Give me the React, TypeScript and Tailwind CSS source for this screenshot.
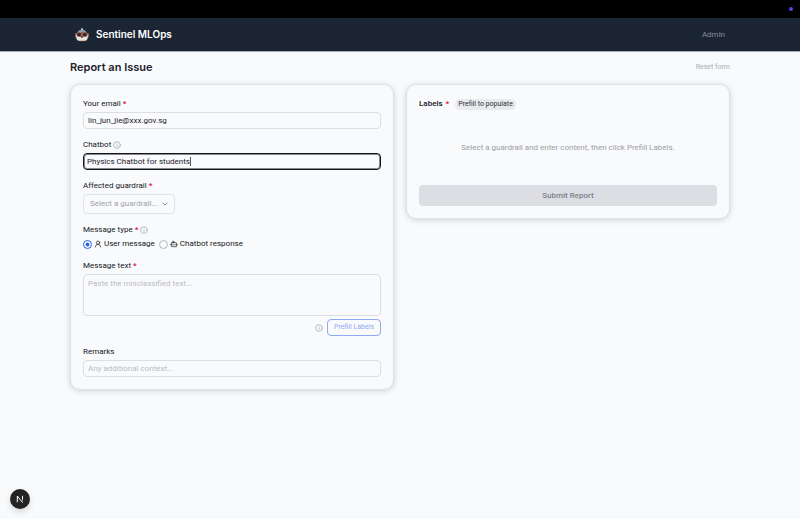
import React, { useState } from "react";
import { Bot, ChevronDown, Info, UserRound } from "lucide-react";

const inputClasses =
  "block h-[17px] w-full rounded-[4px] border border-[#dcdee3] bg-transparent px-1 text-[8px] leading-[12px] text-[#1d2028] outline-none placeholder:text-[#b9bcc4]";

type LabelProps = {
  htmlFor: string;
  text: string;
  required?: boolean;
  info?: boolean;
};

const FieldLabel: React.FC<LabelProps> = ({ htmlFor, text, required, info }) => (
  <div className="flex h-[13px] items-center gap-[2px] pt-px text-[8px] text-[#14161c]">
    <label htmlFor={htmlFor}>{text}</label>
    {required && <span className="font-bold text-[#e11d48]">*</span>}
    {info && <Info size={8} className="text-[#9a9da5]" />}
  </div>
);

const Logo = () => (
  <svg width="14" height="14" viewBox="0 0 14 14" aria-hidden="true">
    <rect x="6" y="0" width="2" height="3" rx="1" fill="#b9c6d4" />
    <path d="M2.5 5Q3 1.8 7 1.8T11.5 5Z" fill="#8d9bab" />
    <rect x="0" y="5" width="2.6" height="4.4" rx="1.2" fill="#9a5f50" />
    <rect x="11.4" y="5" width="2.6" height="4.4" rx="1.2" fill="#9a5f50" />
    <rect x="1.2" y="4" width="11.6" height="9" rx="4" fill="#e9e2da" />
    <rect x="1.6" y="4.2" width="10.8" height="4.6" rx="2" fill="#7a463c" />
    <circle cx="4.3" cy="6.6" r="1.5" fill="#20242c" />
    <circle cx="9.7" cy="6.6" r="1.5" fill="#20242c" />
    <rect x="6.2" y="5.4" width="1.6" height="2.6" fill="#b0705c" />
    <ellipse cx="7" cy="9" rx="1.2" ry="0.8" fill="#33262a" />
    <path d="M4 12.6H10" stroke="#e0b98b" fill="none" />
  </svg>
);

const NextLogo = () => (
  <svg width="8" height="8" viewBox="0 0 8 8" fill="none" aria-hidden="true">
    <defs>
      <linearGradient id="fade" x1="0" y1="0" x2="0" y2="1">
        <stop offset="0.5" stopColor="#fff" />
        <stop offset="1" stopColor="#fff" stopOpacity="0.2" />
      </linearGradient>
    </defs>
    <path d="M1.3 7.2V1L6.6 7.6" stroke="#fff" strokeWidth="1" />
    <rect x="6" y="0.8" width="1" height="5.6" fill="url(#fade)" />
  </svg>
);

const cardClasses =
  "rounded-[10px] border border-[#dfe1e6] bg-[#f9fafc] p-3 shadow-[0_1px_6px_rgba(0,0,0,0.16)]";

const radioClasses =
  "size-[9px] appearance-none rounded-full border border-[#b4b7be] checked:border-[#2563eb] checked:bg-[radial-gradient(circle,#2563eb_35%,transparent_45%)]";

const App: React.FC = () => {
  const [email, setEmail] = useState("lin_jun_jie@xxx.gov.sg");
  const [chatbot, setChatbot] = useState("Physics Chatbot for students");
  const [messageType, setMessageType] = useState("user");

  return (
    <div className="min-h-screen bg-[#f9fafc] font-['Roboto',sans-serif]">
      <div className="flex h-[18px] items-center justify-end bg-black px-[7px]">
        <span className="size-1 rounded-full bg-[#5046e5]" />
      </div>

      <header className="border-b border-[#a3a9b5] bg-[#1c2534]">
        <div className="mx-auto flex h-[33px] max-w-[660px] items-center justify-between px-[5px]">
          <div className="flex items-center gap-[7px]">
            <Logo />
            <span className="font-['Inter',sans-serif] text-[10px] font-semibold text-white">
              Sentinel MLOps
            </span>
          </div>
          <a href="#admin" className="text-[8px] text-[#878e9b]">
            Admin
          </a>
        </div>
      </header>

      <main className="mx-auto max-w-[660px]">
        <div className="mb-0.5 flex h-[30px] items-center justify-between">
          <h1 className="font-['Inter',sans-serif] text-[11px] font-semibold text-[#1d212c]">
            Report an Issue
          </h1>
          <button type="button" className="text-[7px] text-[#a9acb5]">
            Reset form
          </button>
        </div>

        <form className="grid grid-cols-2 items-start gap-3" onSubmit={(e) => e.preventDefault()}>
          <section className={`flex flex-col gap-[9px] ${cardClasses}`}>
            <div className="flex flex-col gap-[2px]">
              <FieldLabel htmlFor="email" text="Your email" required />
              <input
                id="email"
                className={inputClasses}
                value={email}
                onChange={(e) => setEmail(e.target.value)}
              />
            </div>

            <div className="flex flex-col gap-[2px]">
              <FieldLabel htmlFor="chatbot" text="Chatbot" info />
              <div className="flex h-[17px] items-center rounded-[4px] border border-[#14161c] px-[3px] ring-1 ring-[#14161c]/50 ring-inset">
                <input
                  id="chatbot"
                  className="max-w-full bg-transparent text-[8px] leading-[12px] text-[#1d2028] outline-none [field-sizing:content]"
                  value={chatbot}
                  onChange={(e) => setChatbot(e.target.value)}
                />
                <span className="h-[9px] w-px bg-[#55585f]" />
              </div>
            </div>

            <div className="flex flex-col gap-[2px]">
              <FieldLabel htmlFor="guardrail" text="Affected guardrail" required />
              <div className="grid w-[92px] items-center">
                <select
                  id="guardrail"
                  className="col-start-1 row-start-1 h-5 w-full appearance-none rounded-[4px] border border-[#e3e4e8] bg-transparent px-1.5 text-[8px] text-[#a0a3ab] outline-none"
                >
                  <option>Select a guardrail...</option>
                </select>
                <ChevronDown
                  size={8}
                  className="pointer-events-none col-start-1 row-start-1 mr-1.5 justify-self-end text-[#55585f]"
                />
              </div>
            </div>

            <div className="flex flex-col gap-[2px]">
              <FieldLabel htmlFor="type-user" text="Message type" required info />
              <div className="flex h-3 items-center gap-1 text-[8px] text-[#14161c]">
                <label className="flex items-center gap-[2px]">
                  <input
                    id="type-user"
                    type="radio"
                    name="type"
                    className={radioClasses}
                    checked={messageType === "user"}
                    onChange={() => setMessageType("user")}
                  />
                  <UserRound size={8} />
                  User message
                </label>
                <label className="flex items-center gap-[2px]">
                  <input
                    type="radio"
                    name="type"
                    className={radioClasses}
                    checked={messageType === "bot"}
                    onChange={() => setMessageType("bot")}
                  />
                  <Bot size={8} />
                  Chatbot response
                </label>
              </div>
            </div>

            <div className="flex flex-col gap-[2px]">
              <FieldLabel htmlFor="message" text="Message text" required />
              <textarea
                id="message"
                placeholder="Paste the misclassified text..."
                className="block h-[42px] w-full resize-none rounded-[4px] border border-[#dcdee3] bg-transparent px-1 py-[3px] text-[8px] leading-[12px] text-[#1d2028] outline-none placeholder:text-[#b9bcc4]"
              />
              <div className="flex items-center justify-end gap-1 pt-px">
                <Info size={8} className="text-[#9a9da5]" />
                <button
                  type="button"
                  className="h-[17px] rounded-[4px] border border-[#8fa9f3] px-1.5 text-[7px] text-[#8fa7f0]"
                >
                  Prefill Labels
                </button>
              </div>
            </div>

            <div className="flex flex-col gap-[2px]">
              <FieldLabel htmlFor="remarks" text="Remarks" />
              <input id="remarks" className={inputClasses} placeholder="Any additional context..." />
            </div>
          </section>

          <section className={cardClasses}>
            <div className="flex h-[14px] items-center gap-[3px] text-[8px] font-medium text-[#14161c]">
              <h2>Labels</h2>
              <span className="font-bold text-[#e11d48]">*</span>
              <span className="ml-[3px] rounded-full bg-[#e9eaee] px-[3px] text-[7px] leading-[11px] font-normal text-[#2b2f38]">
                Prefill to populate
              </span>
            </div>
            <p className="py-[31px] text-center text-[8px] leading-[12px] text-[#9a9da5]">
              Select a guardrail and enter content, then click Prefill Labels.
            </p>
            <button
              type="submit"
              disabled
              className="block h-[21px] w-full rounded-[4px] bg-[#dcdee3] text-[8px] font-medium text-[#7c7f86]"
            >
              Submit Report
            </button>
          </section>
        </form>
      </main>

      <button
        type="button"
        aria-label="Open dev tools"
        className="fixed bottom-[10px] left-[10px] flex size-5 items-center justify-center rounded-full bg-[#242424] shadow-[0_3px_6px_rgba(0,0,0,0.14)]"
      >
        <NextLogo />
      </button>
    </div>
  );
};

export default App;
